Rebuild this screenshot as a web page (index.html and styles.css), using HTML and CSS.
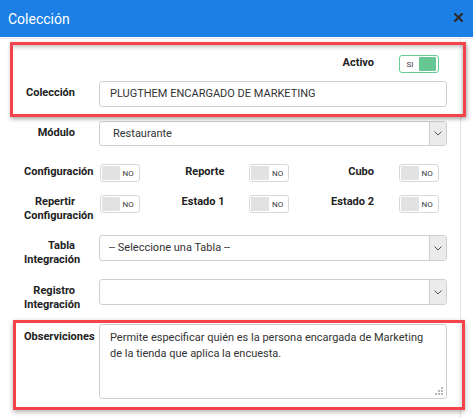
FILE: index.html
```html
<!DOCTYPE html>
<html lang="es">
<head>
<meta charset="utf-8">
<title>Colección</title>
<link rel="stylesheet" href="styles.css">
</head>
<body>
<div class="modal">
  <div class="modal-header">
    <span class="modal-title">Colección</span>
    <svg class="close" width="9" height="9" viewBox="0 0 9 9"><path d="M1 1 L8 8 M8 1 L1 8" stroke="#2b2b2b" stroke-width="2.2" stroke-linecap="square"/></svg>
  </div>
  <div class="header-line"></div>
  <div class="modal-body">
    <div class="highlight hl-top">
      <div class="trow">
        <div class="tgroup"></div>
        <div class="tgroup"></div>
        <div class="tgroup">
          <div class="tlabel">Activo</div>
          <div class="toggle on"><span class="ttext">SI</span><span class="knob"></span></div>
        </div>
      </div>
      <div class="frow mt8">
        <div class="flabel">Colección</div>
        <div class="input">PLUGTHEM ENCARGADO DE MARKETING</div>
      </div>
    </div>

    <div class="frow plain mt4">
      <div class="flabel">Módulo</div>
      <div class="select h25"><span class="select-text pl13">Restaurante</span><span class="select-arrow"><svg width="8" height="5" viewBox="0 0 8 5"><polyline points="0.5,0.5 4,4 7.5,0.5" fill="none" stroke="#555" stroke-width="1"/></svg></span></div>
    </div>

    <div class="trow plain mt18">
      <div class="tgroup">
        <div class="tlabel">Configuración</div>
        <div class="toggle"><span class="knob"></span><span class="ttext">NO</span></div>
      </div>
      <div class="tgroup">
        <div class="tlabel">Reporte</div>
        <div class="toggle"><span class="knob"></span><span class="ttext">NO</span></div>
      </div>
      <div class="tgroup">
        <div class="tlabel">Cubo</div>
        <div class="toggle"><span class="knob"></span><span class="ttext">NO</span></div>
      </div>
    </div>

    <div class="trow plain mt13">
      <div class="tgroup">
        <div class="tlabel tlabel-top">Repertir Configuración</div>
        <div class="toggle"><span class="knob"></span><span class="ttext">NO</span></div>
      </div>
      <div class="tgroup">
        <div class="tlabel tlabel-top">Estado 1</div>
        <div class="toggle"><span class="knob"></span><span class="ttext">NO</span></div>
      </div>
      <div class="tgroup">
        <div class="tlabel tlabel-top">Estado 2</div>
        <div class="toggle"><span class="knob"></span><span class="ttext">NO</span></div>
      </div>
    </div>

    <div class="frow plain mt12">
      <div class="flabel pt4">Tabla Integración</div>
      <div class="select"><span class="select-text pl9">-- Seleccione una Tabla --</span><span class="select-arrow"><svg width="8" height="5" viewBox="0 0 8 5"><polyline points="0.5,0.5 4,4 7.5,0.5" fill="none" stroke="#555" stroke-width="1"/></svg></span></div>
    </div>

    <div class="frow plain mt12">
      <div class="flabel">Registro Integración</div>
      <div class="select"><span class="select-text pl9"></span><span class="select-arrow"><svg width="8" height="5" viewBox="0 0 8 5"><polyline points="0.5,0.5 4,4 7.5,0.5" fill="none" stroke="#555" stroke-width="1"/></svg></span></div>
    </div>

    <div class="highlight hl-bottom">
      <div class="frow">
        <div class="flabel pt6">Observiciones</div>
        <div class="textarea">Permite especificar quién es la persona encargada de Marketing de la tienda que aplica la encuesta.
          <svg class="grip" width="8" height="8" viewBox="0 0 8 8" fill="#b8b8b8"><rect x="6" y="0" width="2" height="2"/><rect x="3" y="3" width="2" height="2"/><rect x="6" y="3" width="2" height="2"/><rect x="0" y="6" width="2" height="2"/><rect x="3" y="6" width="2" height="2"/><rect x="6" y="6" width="2" height="2"/></svg>
        </div>
      </div>
    </div>
  </div>
</div>
</body>
</html>
```

FILE: styles.css
```css
* { box-sizing: border-box; }
html, body { margin: 0; padding: 0; background: #fff; }
body {
  font-family: Roboto, "Liberation Sans", Arial, sans-serif;
  font-size: 11px;
  color: #333;
  width: 473px;
  height: 418px;
  overflow: hidden;
}
.modal-header {
  height: 37px;
  background: #1b7fe5;
  display: flex;
  align-items: center;
  justify-content: space-between;
  padding: 0 10px 0 8px;
}
.modal-title {
  color: #fff;
  font-size: 14px;
  line-height: 18px;
}
.close { display: block; margin-top: -2px; }
.header-line {
  height: 1px;
  margin-top: 1px;
  background: #e4e4e4;
}
.modal-body {
  width: 461px;
  border-right: 1px solid #e6e6e6;
  padding-top: 3px;
  padding-bottom: 20px;
}
.highlight {
  border: 3px solid #f5434b;
  background: #fff;
  position: relative;
}
.hl-top {
  margin-left: 10px;
  width: 456px;
  padding: 10px 16px 7px 11px;
  box-shadow: 1px 2px 4px rgba(0,0,0,0.35), inset 0 4px 4px -2px rgba(0,0,0,0.22), inset -3px 0 3px -1px rgba(0,0,0,0.15);
}
.hl-bottom {
  margin-left: 13px;
  margin-top: 8px;
  width: 452px;
  padding: 1px 15px 8px 8px;
  box-shadow: 0 2px 5px rgba(0,0,0,0.3), inset -3px 0 3px -1px rgba(0,0,0,0.12);
}
.plain { padding-left: 24px; }
.mt4 { margin-top: 4px; }
.mt8 { margin-top: 8px; }
.mt12 { margin-top: 12px; }
.mt13 { margin-top: 13px; }
.mt18 { margin-top: 18px; }

.frow {
  display: flex;
  align-items: flex-start;
  gap: 24px;
}
.flabel {
  width: 51px;
  flex: none;
  text-align: right;
  font-weight: 700;
  color: #222;
  line-height: 14px;
  padding-top: 5px;
}
.pt4 { padding-top: 4px; }
.pt6 { padding-top: 6px; }

.input {
  width: 348px;
  height: 26px;
  border: 1px solid #cfcfcf;
  border-radius: 3px;
  padding-left: 10px;
  line-height: 24px;
  color: #333;
  white-space: nowrap;
}
.select {
  width: 348px;
  height: 26px;
  border: 1px solid #cfcfcf;
  border-radius: 3px;
  display: flex;
  overflow: hidden;
}
.h25 { height: 25px; }
.select-text {
  flex: 1;
  line-height: 24px;
  color: #333;
  white-space: nowrap;
}
.pl13 { padding-left: 13px; }
.pl9 { padding-left: 9px; }
.select-arrow {
  width: 17px;
  flex: none;
  background: #ebebeb;
  border-left: 1px solid #cfcfcf;
  display: flex;
  align-items: center;
  justify-content: center;
}
.select-arrow svg { display: block; }

.trow {
  display: flex;
  align-items: flex-start;
}
.tgroup {
  width: 149.5px;
  flex: none;
  display: flex;
  align-items: flex-start;
  gap: 24.5px;
}
.tlabel {
  width: 51px;
  flex: none;
  text-align: right;
  font-weight: 700;
  color: #222;
  line-height: 14px;
  padding-top: 1px;
}
.tlabel-top { padding-top: 0; }

.toggle {
  width: 40px;
  height: 18px;
  flex: none;
  border: 1px solid #d8d8d8;
  border-radius: 3px;
  background: #fff;
  display: flex;
  align-items: center;
  padding: 1px;
}
.toggle .knob {
  width: 18px;
  height: 14px;
  background: #e2e2e2;
  border-radius: 1px;
}
.toggle .ttext {
  font-size: 8px;
  line-height: 10px;
  color: #3a3a3a;
  margin-left: 3px;
  margin-top: 1px;
}
.toggle.on {
  border-color: #68c796;
  padding: 1px 2px 1px 1px;
  justify-content: space-between;
}
.toggle.on .ttext {
  margin-left: 6px;
}
.toggle.on .knob {
  width: 17px;
  background: #66c794;
}

.textarea {
  position: relative;
  width: 348px;
  height: 75px;
  border: 1px solid #cfcfcf;
  border-radius: 3px;
  padding: 5px 16px 0 10px;
  line-height: 16px;
  color: #333;
}
.grip {
  position: absolute;
  right: 3px;
  bottom: 3px;
}
```
